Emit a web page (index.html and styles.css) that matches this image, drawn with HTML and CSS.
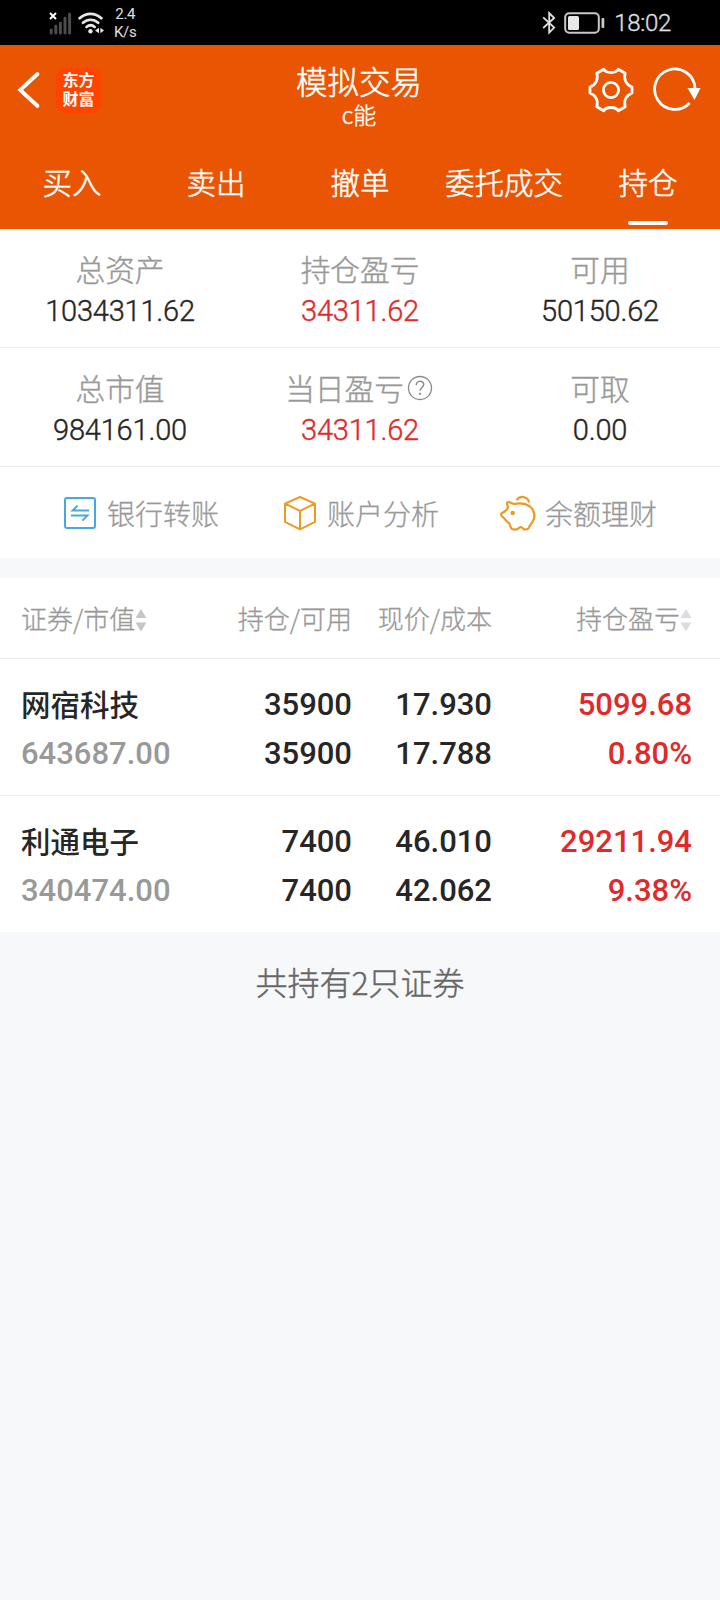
FILE: index.html
```html
<!DOCTYPE html>
<html lang="zh-CN">
<head>
    <meta charset="UTF-8">
    <title>模拟交易</title>
    <meta name="viewport" content="width=device-width, initial-scale=1.0">
    <link rel="stylesheet" href="styles.css">
</head>
<body>
    <div class="status-bar">
        <svg class="signal" width="24" height="24" viewBox="0 0 24 24">
            <path d="M1 2l6 6M7 2l-6 6" stroke="#fff" stroke-width="2"/>
            <path d="M2.2 22v-3M6.8 22v-7M11.4 22V12M16 22V7M20.6 22V3" stroke="#4c4c4c" stroke-width="3" stroke-linecap="round"/>
        </svg>
        <svg class="wifi" width="26" height="24" viewBox="0 0 26 24">
            <g fill="none" stroke="#e8e8e8" stroke-width="2.7" stroke-linecap="round">
                <path d="M1.6 7.2C8 1.4 17 1.4 23.4 7.2"/>
                <path d="M5 11.8c4.6-4.1 10.6-4.1 15.2 0"/>
                <path d="M8.5 16c2.6-2.2 5.6-2.2 8.2 0"/>
            </g>
            <circle cx="12.5" cy="20.2" r="2.2" fill="#e8e8e8"/>
            <path d="M21 16.8v5.4L17 19.5zM22.4 16.8v5.4l3.6-2.7z" fill="#e8e8e8"/>
        </svg>
        <div class="speed">2.4<br>K/s</div>
        <div class="status-right">
            <svg width="14" height="24" viewBox="0 0 14 24">
                <path d="M1.2 6.4l11 10.2-5 5V2l5 5L1.2 17" fill="none" stroke="#e0e0e0" stroke-width="1.8"/>
            </svg>
            <svg class="battery" width="42" height="22" viewBox="0 0 42 22">
                <rect x="1.2" y="1.2" width="33.6" height="19.6" rx="4" fill="none" stroke="#c8c8c8" stroke-width="2"/>
                <rect x="4" y="4" width="11" height="14" rx="1.5" fill="#e8e8e8"/>
                <rect x="37.5" y="6" width="2.8" height="10" rx="1" fill="#c8c8c8"/>
            </svg>
            <span class="clock">18:02</span>
        </div>
    </div>

    <header>
        <div class="title-bar">
            <div class="left">
                <svg width="24" height="38" viewBox="0 0 24 38">
                    <path d="M20.5 3L3.2 19l17.3 16" fill="none" stroke="#fff" stroke-width="3.8" stroke-linecap="round"/>
                </svg>
                <div class="logo">东方<br>财富</div>
            </div>
            <div class="title">
                <h1>模拟交易</h1>
                <p>c能</p>
            </div>
            <div class="right">
                <svg width="46" height="46" viewBox="0 0 46 46">
                    <path d="M15.7 2.2C18 6.6 28 6.6 30.3 2.2L37.2 6.2C35.5 12 38 17.5 44 20V26C38 28.5 35.5 34 37.2 39.8L30.3 43.8C28 39.4 18 39.4 15.7 43.8L8.8 39.8C10.5 34 8 28.5 2 26V20C8 17.5 10.5 12 8.8 6.2Z" fill="none" stroke="#fff" stroke-width="2.8" stroke-linejoin="round"/>
                    <circle cx="23" cy="23" r="7.6" fill="none" stroke="#fff" stroke-width="2.8"/>
                </svg>
                <svg width="48" height="46" viewBox="0 0 48 46">
                    <path d="M36.6 36A20.2 20.2 0 1 1 42 21" fill="none" stroke="#fff" stroke-width="2.8"/>
                    <path d="M34.5 21h13L41.5 33z" fill="#fff"/>
                </svg>
            </div>
        </div>
        <nav>
            <a>买入</a>
            <a>卖出</a>
            <a>撤单</a>
            <a>委托成交</a>
            <a class="active">持仓</a>
        </nav>
    </header>

    <section class="summary">
        <div class="item"><span>总资产</span><b>1034311.62</b></div>
        <div class="item"><span>持仓盈亏</span><b class="up">34311.62</b></div>
        <div class="item"><span>可用</span><b>50150.62</b></div>
    </section>
    <section class="summary">
        <div class="item"><span>总市值</span><b>984161.00</b></div>
        <div class="item">
            <span>当日盈亏<svg class="help" width="26" height="26" viewBox="0 0 26 26">
                <circle cx="13" cy="13" r="11.5" fill="none" stroke="#8a8a8a" stroke-width="1.3"/>
                <path d="M9.3 10.2c0-5 7.4-5 7.4-.6 0 3-3.7 3.3-3.7 6.2" fill="none" stroke="#8a8a8a" stroke-width="1.5"/>
                <circle cx="13" cy="18.9" r="1.1" fill="#8a8a8a"/>
            </svg></span>
            <b class="up">34311.62</b>
        </div>
        <div class="item"><span>可取</span><b>0.00</b></div>
    </section>

    <section class="actions">
        <a>
            <svg width="34" height="36" viewBox="0 0 34 36">
                <g fill="none" stroke="#45a9e0" stroke-width="2">
                    <rect x="2" y="3" width="30" height="30" rx="2"/>
                    <path d="M26 15.6H9.6l5-5M8 20.6h16.4l-5 5"/>
                </g>
            </svg>
            银行转账
        </a>
        <a>
            <svg width="34" height="36" viewBox="0 0 34 36">
                <path d="M17 2l15 6.7v18.2L17 34.3 2 26.9V8.7zM2 8.7l15 7.1 15-7.1M17 15.8v18.5" fill="none" stroke="#ec9a24" stroke-width="2" stroke-linejoin="round"/>
            </svg>
            账户分析
        </a>
        <a>
            <svg width="36" height="36" viewBox="0 0 36 36">
                <path d="M8 12.3C7.6 10.5 6 7.3 8 7.2C10.5 7 12 8.5 14 9C20 7.6 26 8.6 30 11.5C34.5 15 35.5 21 33 26C31.5 29 29.5 30 29 32.5C28.5 34.5 25 35 23.5 34C22 31.5 19.5 31.5 18 33.8C16 34.8 14 34.8 12 34C10 32.5 10.5 30.5 9.3 28.5C8 26.5 6 26.5 5.2 24.5C4.5 22.5 1.3 22 1.2 20V18.5C3 17.5 7 16 8 12.3Z" fill="none" stroke="#ec9a24" stroke-width="2.2" stroke-linejoin="round"/>
                <path d="M16.7 5.2C19.5.6 28 .6 29 7.5" fill="none" stroke="#ec9a24" stroke-width="2.2"/>
                <circle cx="12.7" cy="18" r="2.2" fill="#ec9a24"/>
            </svg>
            余额理财
        </a>
    </section>

    <table id="holdings">
        <thead>
            <tr>
                <th>证券/市值<svg class="sort" width="12" height="24" viewBox="0 0 12 24"><path d="M6 1l5.5 9H.5zM6 23.5l5.5-9H.5z" fill="#c6c6c6"/></svg></th>
                <th>持仓/可用</th>
                <th>现价/成本</th>
                <th>持仓盈亏<svg class="sort" width="12" height="24" viewBox="0 0 12 24"><path d="M6 1l5.5 9H.5zM6 23.5l5.5-9H.5z" fill="#dcdcdc"/></svg></th>
            </tr>
        </thead>
        <tbody>
            <tr>
                <td><div class="name">网宿科技</div><div class="value">643687.00</div></td>
                <td><div>35900</div><div>35900</div></td>
                <td><div>17.930</div><div>17.788</div></td>
                <td class="up"><div>5099.68</div><div>0.80%</div></td>
            </tr>
            <tr>
                <td><div class="name">利通电子</div><div class="value">340474.00</div></td>
                <td><div>7400</div><div>7400</div></td>
                <td><div>46.010</div><div>42.062</div></td>
                <td class="up"><div>29211.94</div><div>9.38%</div></td>
            </tr>
        </tbody>
    </table>

    <footer>共持有2只证券</footer>
</body>
</html>
```
FILE: styles.css
```css
* {
    box-sizing: border-box;
}

body {
    margin: 0;
    min-height: 1600px;
    background-color: #f7f8fa;
    color: #262626;
    font-family: "Noto Sans CJK SC", sans-serif;
}

svg {
    display: block;
    flex: none;
}

/* phone status bar */
.status-bar {
    display: flex;
    align-items: center;
    height: 45px;
    padding: 0 49px;
    background-color: #000;
    color: #e0e0e0;
    font-family: Roboto, sans-serif;
}

.wifi {
    margin-left: 5px;
}

.speed {
    margin-left: 10px;
    font-size: 15px;
    letter-spacing: -0.3px;
    line-height: 18px;
    text-align: center;
}

.status-right {
    display: flex;
    align-items: center;
    margin-left: auto;
}

.battery {
    margin: 0 8px 0 8px;
}

.clock {
    font-size: 24px;
    font-weight: 300;
    letter-spacing: -0.3px;
    -webkit-text-stroke: 0.3px;
}

/* orange header */
header {
    height: 184px;
    background-color: #ea5504;
    color: #fff;
}

.title-bar {
    display: grid;
    grid-template-columns: 1fr auto 1fr;
    height: 90px;
    align-items: center;
    padding: 0 19px 0 17px;
}

.left, .right {
    display: flex;
    align-items: center;
}

.logo {
    width: 45px;
    height: 45px;
    margin-left: 15px;
    padding-top: 2px;
    border-radius: 9px;
    background-color: #ff4400;
    font-size: 16px;
    font-weight: 700;
    line-height: 19px;
    text-align: center;
}

.title {
    padding-top: 11px;
    text-align: center;
}

h1 {
    margin: 0;
    font-size: 31.5px;
    font-weight: 300;
    line-height: 36px;
    -webkit-text-stroke: 0.5px;
}

.title p {
    margin: 0;
    font-size: 23px;
    font-weight: 300;
    line-height: 32px;
    -webkit-text-stroke: 0.4px;
}

.right {
    justify-content: flex-end;
    gap: 19px;
}

nav {
    display: flex;
    height: 94px;
}

nav a {
    display: flex;
    flex: 1;
    flex-direction: column;
    align-items: center;
    padding-top: 24px;
    font-size: 29.5px;
    font-weight: 300;
    line-height: 44px;
    white-space: nowrap;
    -webkit-text-stroke: 0.5px;
}

nav .active::after {
    content: "";
    width: 40px;
    height: 4px;
    margin-top: 18px;
    border-radius: 2px;
    background-color: #fff;
}

/* account summary */
.summary {
    display: flex;
    height: 119px;
    padding-top: 19px;
    background-color: #fff;
    border-bottom: 1px solid #ebebeb;
}

.item {
    display: flex;
    flex: 1;
    flex-direction: column;
    align-items: center;
}

.item span {
    display: flex;
    align-items: center;
    color: #999;
    font-size: 29.7px;
    font-weight: 300;
    line-height: 42px;
    -webkit-text-stroke: 0.4px;
}

.item b {
    font-family: Roboto, sans-serif;
    font-size: 29px;
    font-weight: 300;
    letter-spacing: -0.2px;
    line-height: 43px;
    -webkit-text-stroke: 0.4px;
}

.help {
    margin: 0 2px 0 3px;
}

.item .up, #holdings .up {
    color: #e02a2a;
}

.actions {
    display: flex;
    height: 91px;
    padding: 0 63px;
    align-items: center;
    justify-content: space-between;
    background-color: #fff;
}

.actions a {
    display: flex;
    align-items: center;
    gap: 10px;
    color: #999;
    font-size: 28px;
    font-weight: 300;
    -webkit-text-stroke: 0.3px;
}

.actions a:nth-child(2) {
    margin-left: 3px;
}

.actions a:last-child {
    gap: 9px;
}

/* holdings list */
#holdings {
    width: 100%;
    margin-top: 20px;
    border-collapse: separate;
    border-spacing: 0;
    table-layout: fixed;
    background-color: #fff;
}

#holdings th, #holdings td {
    padding: 0;
    text-align: right;
    white-space: nowrap;
}

#holdings th {
    width: 140px;
    height: 81px;
    padding-bottom: 2px;
    border-bottom: 1px solid #ebebeb;
    color: #999;
    font-size: 26px;
    font-weight: 300;
    -webkit-text-stroke: 0.3px;
}

#holdings th:first-child, #holdings td:first-child {
    width: 212px;
    padding-left: 21px;
    text-align: left;
}

#holdings th:last-child, #holdings td:last-child {
    width: 228px;
    padding-right: 28px;
}

#holdings td {
    height: 137px;
    padding-top: 4px;
    border-bottom: 1px solid #ebebeb;
    font-family: Roboto, sans-serif;
    font-size: 31px;
    font-weight: 500;
    line-height: 49px;
}

#holdings td div {
    height: 49px;
}

#holdings tr:last-child td {
    height: 136px;
    border-bottom: none;
}

#holdings .name {
    font-family: "Noto Sans CJK SC", sans-serif;
    font-size: 29.5px;
    line-height: 46px;
}

#holdings .value {
    color: #999;
}

.sort {
    display: inline-block;
    vertical-align: -3px;
}

footer {
    padding-top: 26px;
    color: #666;
    font-size: 32px;
    font-weight: 300;
    line-height: 46px;
    text-align: center;
    -webkit-text-stroke: 0.4px;
}
```
